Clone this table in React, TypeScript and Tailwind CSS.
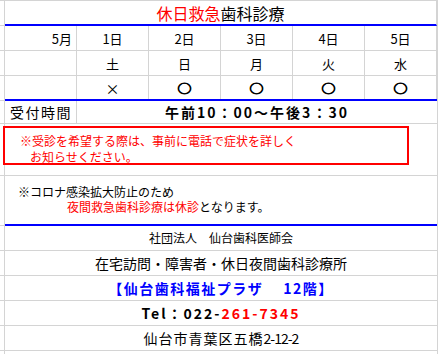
import React from "react";

const days = [
  { d: "1日", w: "土", m: "×" },
  { d: "2日", w: "日", m: "○" },
  { d: "3日", w: "月", m: "○" },
  { d: "4日", w: "火", m: "○" },
  { d: "5日", w: "水", m: "○" },
];

function Lead() {
  return <div className="w-[5px] h-full shrink-0 border-r border-b border-[#d4d4d4]" />;
}

function Cell({ children, className = "" }: { children?: React.ReactNode; className?: string }) {
  return (
    <div className={"w-[72px] h-full shrink-0 border-r border-[#d4d4d4] flex items-center " + className}>
      {children}
    </div>
  );
}

export default function App() {
  return (
    <div className="w-[440px] h-[354px] bg-white overflow-hidden text-black font-[family-name:Noto_Sans_CJK_JP,sans-serif]">
      <div className="w-[438px] border-t border-r border-[#d4d4d4]">
        {/* Title */}
        <div className="flex h-[25px]">
          <Lead />
          <div className="flex-1 h-full border-b-2 border-r border-b-[#0000ff] border-r-[#d4d4d4] flex items-center justify-center text-[16px] leading-none">
            <span className="text-[#ff0000]">休日救急</span>
            <span>歯科診療</span>
          </div>
        </div>
        {/* Dates */}
        <div className="flex h-[25px]">
          <Lead />
          <div className="flex-1 h-full flex border-b border-[#d4d4d4] text-[13px] leading-none">
            <Cell className="justify-end pr-[4px]">5月</Cell>
            {days.map((x) => (
              <Cell key={x.d} className="justify-center">{x.d}</Cell>
            ))}
          </div>
        </div>
        {/* Weekdays */}
        <div className="flex h-[25px]">
          <Lead />
          <div className="flex-1 h-full flex border-b border-[#d4d4d4] text-[13px] leading-none">
            <Cell />
            {days.map((x) => (
              <Cell key={x.w} className="justify-center">{x.w}</Cell>
            ))}
          </div>
        </div>
        {/* Marks */}
        <div className="flex h-[25px]">
          <Lead />
          <div className="flex-1 h-full flex border-b-2 border-[#0000ff] text-[14px] leading-none">
            <Cell className="border-r-[#d4d4d4]" />
            {days.map((x, i) => (
              <Cell key={i} className="justify-center border-r-[#d4d4d4]">
                {x.m === "○" ? (
                  <span className="inline-block scale-y-[0.8] [-webkit-text-stroke:1px_#000]">○</span>
                ) : (
                  <span>{x.m}</span>
                )}
              </Cell>
            ))}
          </div>
        </div>
        {/* Reception hours */}
        <div className="flex h-[23px]">
          <Lead />
          <div className="flex-1 h-full flex border-b border-[#d4d4d4]">
            <Cell className="pl-[5px] text-[14px] tracking-[1.5px] leading-none">受付時間</Cell>
            <div className="flex-1 h-full flex items-center justify-center font-bold text-[14px] tracking-[2px] leading-none">
              午前10：00～午後3：30
            </div>
          </div>
        </div>
        {/* Red notice */}
        <div className="flex h-[52px]">
          <Lead />
          <div className="flex-1 h-full border-b border-[#d4d4d4]">
            <div className="ml-[-2px] mt-[2px] w-[406px] h-[39px] border-2 border-[#ff0000] text-[#ff0000] text-[12px] leading-[16px] pt-[5px] pl-[15px]">
              <div>※受診を希望する際は、事前に電話で症状を詳しく</div>
              <div className="pl-[10px]">お知らせください。</div>
            </div>
          </div>
        </div>
        {/* Corona notice */}
        <div className="flex h-[50px]">
          <Lead />
          <div className="flex-1 h-full border-b-2 border-[#0000ff] text-[12px] leading-[15px] pt-[8px] pl-[13px]">
            <div>※コロナ感染拡大防止のため</div>
            <div className="pl-[49px]">
              <span className="text-[#ff0000]">夜間救急歯科診療は休診</span>
              <span>となります。</span>
            </div>
          </div>
        </div>
        {/* Footer rows */}
        <div className="flex h-[25px]">
          <Lead />
          <div className="flex-1 h-full border-b border-[#d4d4d4] flex items-center justify-center text-[12px] leading-none">
            社団法人　仙台歯科医師会
          </div>
        </div>
        <div className="flex h-[25px]">
          <Lead />
          <div className="flex-1 h-full border-b border-[#d4d4d4] flex items-center justify-center text-[14px] leading-none">
            在宅訪問・障害者・休日夜間歯科診療所
          </div>
        </div>
        <div className="flex h-[25px]">
          <Lead />
          <div className="flex-1 h-full border-b border-[#d4d4d4] flex items-center justify-center text-[14px] font-bold tracking-[1.5px] text-[#0000ff] leading-none whitespace-pre">
            【仙台歯科福祉プラザ　 12階】
          </div>
        </div>
        <div className="flex h-[25px]">
          <Lead />
          <div className="flex-1 h-full border-b border-[#d4d4d4] flex items-center justify-center text-[14px] font-bold tracking-[2px] leading-none">
            <span>Tel：022-</span>
            <span className="text-[#ff0000]">261-7345</span>
          </div>
        </div>
        <div className="flex h-[25px]">
          <Lead />
          <div className="flex-1 h-full border-b border-[#d4d4d4] flex items-center justify-center text-[14px] leading-none">
            <span className="tracking-[1px]">仙台市青葉区五橋</span>
            <span className="tracking-[-1px]">2-12-2</span>
          </div>
        </div>
        <div className="flex h-[3px]">
          <div className="w-[5px] h-full border-r border-[#d4d4d4]" />
        </div>
      </div>
    </div>
  );
}
